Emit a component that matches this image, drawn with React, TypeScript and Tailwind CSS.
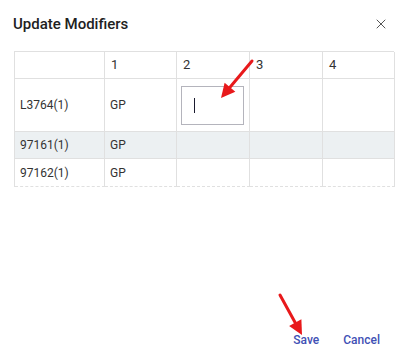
import { X } from 'lucide-react'

const rows = [
  { code: 'L3764(1)', mod: 'GP', tall: true, shade: false },
  { code: '97161(1)', mod: 'GP', tall: false, shade: true },
  { code: '97162(1)', mod: 'GP', tall: false, shade: false },
]

function Arrow({ x1, y1, x2, y2 }: { x1: number; y1: number; x2: number; y2: number }) {
  const ang = Math.atan2(y2 - y1, x2 - x1)
  const len = 14
  const w = 7
  const bx = x2 - len * Math.cos(ang)
  const by = y2 - len * Math.sin(ang)
  const px = -Math.sin(ang) * w
  const py = Math.cos(ang) * w
  return (
    <g>
      <line x1={x1} y1={y1} x2={bx} y2={by} stroke="#e8191b" strokeWidth={3} strokeLinecap="round" />
      <polygon points={`${x2},${y2} ${bx + px},${by + py} ${bx - px},${by - py}`} fill="#e8191b" />
    </g>
  )
}

export default function App() {
  return (
    <div
      className="relative flex h-[363px] w-[404px] flex-col bg-white text-[#212121]"
      style={{ fontFamily: 'Roboto, "Liberation Sans", sans-serif' }}
    >
      <div className="flex items-center justify-between pl-[13px] pr-[15px] pt-[12px]">
        <h2 className="text-[15px] font-medium leading-[24px] text-[#212121]">Update Modifiers</h2>
        <X className="h-[16px] w-[16px] text-[#555]" strokeWidth={1.5} />
      </div>

      <div className="ml-[14px] mt-[15px] w-[380px] text-[12px] text-[#333]">
        <div className="grid grid-cols-[90px_72px_73px_73px_72px] border-t border-l border-[#e0e0e0]">
          <div className="h-[27px] border-r border-b border-[#e0e0e0]" />
          {['1', '2', '3', '4'].map((h) => (
            <div key={h} className="flex h-[27px] items-center border-r border-b border-[#e0e0e0] pl-[6px] text-[13px]">
              {h}
            </div>
          ))}
          {rows.map((r, i) => {
            const last = i === rows.length - 1
            const cell = `border-r border-b border-[#e0e0e0] ${r.shade ? 'bg-[#ecf0f2]' : ''} ${last ? '[border-bottom-style:dashed]' : ''}`
            return (
              <div key={r.code} className="contents">
                <div className={`flex items-center pl-[5px] ${cell} ${r.tall ? 'h-[53px]' : last ? 'h-[28px]' : 'h-[27px]'}`}>
                  {r.code}
                </div>
                <div className={`flex items-center pl-[5px] ${cell}`}>{r.mod}</div>
                <div className={`flex items-center pl-[4px] ${cell}`}>
                  {r.tall && (
                    <div className="flex h-[39px] w-[63px] items-center border border-[#b4b4bc] bg-white pl-[12px]">
                      <span className="h-[15px] w-[1px] bg-[#1a1a2e]" />
                    </div>
                  )}
                </div>
                <div className={cell} />
                <div className={cell} />
              </div>
            )
          })}
        </div>
      </div>

      <div className="flex-1" />

      <div className="flex justify-end gap-[24px] pb-[14px] pr-[24px] text-[12px] font-medium text-[#3f51b5]">
        <button>Save</button>
        <button>Cancel</button>
      </div>

      <svg className="pointer-events-none absolute inset-0" width={404} height={363}>
        <Arrow x1={252} y1={61} x2={221} y2={98} />
        <Arrow x1={280} y1={295} x2={302} y2={335} />
      </svg>
    </div>
  )
}
